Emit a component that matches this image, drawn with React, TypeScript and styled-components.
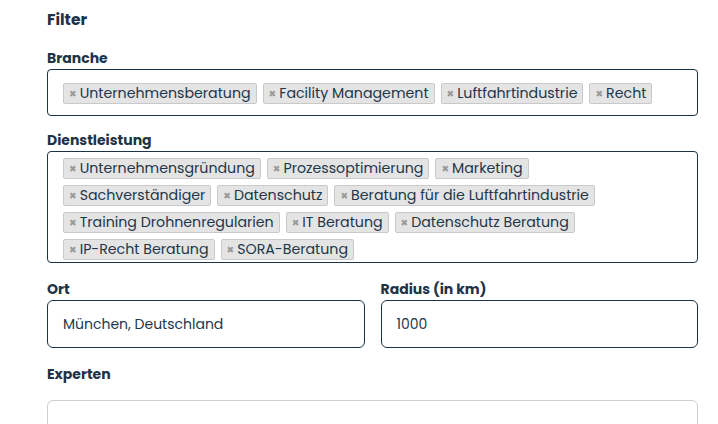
import React from 'react';
import styled, { createGlobalStyle } from 'styled-components';

const GlobalStyle = createGlobalStyle`
  html, body {
    margin: 0;
    padding: 0;
    background: #ffffff;
  }
  body {
    font-family: 'Poppins', 'Open Sans', 'Noto Sans', sans-serif;
    color: #1d3347;
  }
`;

const branchen = [
  'Unternehmensberatung',
  'Facility Management',
  'Luftfahrtindustrie',
  'Recht',
];

const dienstleistungen = [
  'Unternehmensgründung',
  'Prozessoptimierung',
  'Marketing',
  'Sachverständiger',
  'Datenschutz',
  'Beratung für die Luftfahrtindustrie',
  'Training Drohnenregularien',
  'IT Beratung',
  'Datenschutz Beratung',
  'IP-Recht Beratung',
  'SORA-Beratung',
];

const App = () => {
  return (
    <>
      <GlobalStyle />
      <Page>
        <Title>Filter</Title>

        <Label>Branche</Label>
        <TagBox $padTop={13} $padBottom={11}>
          {branchen.map((b) => (
            <Tag key={b}>
              <Remove>×</Remove>
              {b}
            </Tag>
          ))}
        </TagBox>

        <Label $top={14}>Dienstleistung</Label>
        <TagBox $padTop={6} $padBottom={2}>
          {dienstleistungen.map((d) => (
            <Tag key={d}>
              <Remove>×</Remove>
              {d}
            </Tag>
          ))}
        </TagBox>

        <Row>
          <Field>
            <Label>Ort</Label>
            <Input defaultValue="München, Deutschland" />
          </Field>
          <Field>
            <Label>Radius (in km)</Label>
            <Input defaultValue="1000" />
          </Field>
        </Row>

        <Label $top={16}>Experten</Label>
        <ExpertBox />
      </Page>
    </>
  );
};

export default App;

const Page = styled.div`
  width: 651px;
  height: 424px;
  overflow: hidden;
  padding: 9px 0 0 47px;
  box-sizing: content-box;
`;

const Title = styled.h2`
  margin: 0 0 17px;
  font-size: 15.5px;
  line-height: 22px;
  font-weight: 700;
  color: #1d3347;
`;

const Label = styled.div<{ $top?: number }>`
  margin-top: ${(p) => p.$top ?? 0}px;
  margin-bottom: 1px;
  font-size: 14px;
  line-height: 20px;
  font-weight: 700;
  color: #1d3347;
`;

const TagBox = styled.div<{ $padTop: number; $padBottom: number }>`
  display: flex;
  flex-wrap: wrap;
  gap: 6px;
  padding: ${(p) => p.$padTop}px 15px ${(p) => p.$padBottom}px;
  border: 1px solid #1b3445;
  border-radius: 4px;
`;

const Tag = styled.span`
  display: inline-flex;
  align-items: center;
  height: 21px;
  padding: 0 5px;
  box-sizing: border-box;
  background: #e4e4e4;
  border: 1px solid #c9c9c9;
  border-radius: 2px;
  font-size: 14.2px;
  color: #22364a;
  white-space: nowrap;
`;

const Remove = styled.span`
  margin-right: 3px;
  font-size: 12px;
  font-weight: 700;
  color: #999999;
`;

const Row = styled.div`
  display: grid;
  grid-template-columns: 1fr 1fr;
  gap: 16px;
  margin-top: 16px;
`;

const Field = styled.div`
  display: flex;
  flex-direction: column;
`;

const Input = styled.input`
  height: 48px;
  box-sizing: border-box;
  padding: 0 15px;
  border: 1px solid #1b3445;
  border-radius: 6px;
  font-family: inherit;
  font-size: 14px;
  color: #22364a;
  outline: none;
`;

const ExpertBox = styled.div`
  margin-top: 16px;
  height: 60px;
  border: 1px solid #cfcfcf;
  border-radius: 6px;
`;
